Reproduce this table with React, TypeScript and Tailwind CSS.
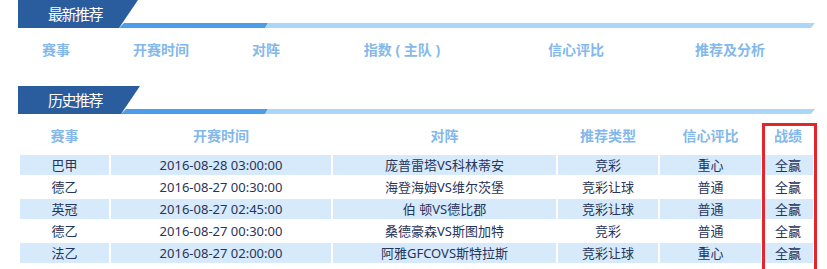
const FONT = '"Microsoft YaHei", "Noto Sans", "Noto Sans CJK SC", sans-serif';

type Row = {
  league: string;
  time: string;
  match: string;
  kind: string;
  level: string;
  result: string;
};

const ROWS: Row[] = [
  { league: '巴甲', time: '2016-08-28 03:00:00', match: '庞普雷塔VS科林蒂安', kind: '竞彩', level: '重心', result: '全赢' },
  { league: '德乙', time: '2016-08-27 00:30:00', match: '海登海姆VS维尔茨堡', kind: '竞彩让球', level: '普通', result: '全赢' },
  { league: '英冠', time: '2016-08-27 02:45:00', match: '伯 顿VS德比郡', kind: '竞彩让球', level: '普通', result: '全赢' },
  { league: '德乙', time: '2016-08-27 00:30:00', match: '桑德豪森VS斯图加特', kind: '竞彩', level: '普通', result: '全赢' },
  { league: '法乙', time: '2016-08-27 02:00:00', match: '阿雅GFCOVS斯特拉斯', kind: '竞彩让球', level: '重心', result: '全赢' },
  { league: '比利甲', time: '2016-08-27 02:30:00', match: '梅赫伦VS列日标准', kind: '竞彩让球', level: '普通', result: '全赢' },
];

// section banner: dark tab on the left, two-tone rule underneath
function Banner({ title, tab }: { title: string; tab: number }) {
  return (
    <div className="relative ml-[18px] h-[28px] w-[797px]">
      <svg className="absolute inset-0" width="797" height="28" viewBox="0 0 797 28">
        <polygon points={`${tab - 14},23 250,23 247,28 ${tab - 19},28`} fill="#4d9cea" />
        <polygon points="250,23 797,23 793,28 247,28" fill="#acd6f8" />
        <polygon points={`0,0 ${tab},0 ${tab - 19},28 0,28`} fill="#2a5d9e" />
      </svg>
      <div className="relative pl-[30px] text-[15px] leading-[28px] tracking-[-1.5px] text-white">
        {title}
      </div>
    </div>
  );
}

const TOP_HEADS: [string, string][] = [
  ['赛事', 'w-[72px]'],
  ['开赛时间', 'w-[138px]'],
  ['对阵', 'w-[72px]'],
  ['指数 ( 主队 )', 'w-[200px]'],
  ['信心评比', 'w-[148px]'],
  ['推荐及分析', 'w-[160px]'],
];

const HIST_HEADS = ['赛事', '开赛时间', '对阵', '推荐类型', '信心评比', '战绩'];
const HIST_WIDTHS = ['w-[89px]', 'w-[220px]', 'w-[223px]', 'w-[100px]', 'w-[101px]', 'w-[50px]'];

export default function App() {
  return (
    <div
      className="relative h-[269px] w-[827px] overflow-hidden bg-white"
      style={{ fontFamily: FONT }}
    >
      <Banner title="最新推荐" tab={120} />

      <div className="ml-[20px] mt-[12px] flex h-[20px] text-[14px] font-bold leading-[20px] text-[#84b8ea]">
        {TOP_HEADS.map(([h, w]) => (
          <div key={h} className={`${w} whitespace-pre text-center`}>
            {h}
          </div>
        ))}
      </div>

      <div className="mt-[26px]">
        <Banner title="历史推荐" tab={122} />
      </div>

      <table className="ml-[18px] mt-[6px] table-fixed border-separate border-spacing-[2px]">
        <colgroup>
          {HIST_WIDTHS.map((w, i) => (
            <col key={i} className={w} />
          ))}
        </colgroup>
        <thead>
          <tr>
            {HIST_HEADS.map((h) => (
              <th
                key={h}
                className="h-[31px] p-0 pb-[4px] text-center text-[14px] font-bold leading-[20px] text-[#84b8ea]"
              >
                {h}
              </th>
            ))}
          </tr>
        </thead>
        <tbody>
          {ROWS.map((r, i) => {
            const bg = i % 2 === 0 ? 'bg-[#d6eafb]' : 'bg-white';
            const cells = [r.league, r.time, r.match, r.kind, r.level, r.result];
            return (
              <tr key={i}>
                {cells.map((c, j) => (
                  <td
                    key={j}
                    className={`${bg} h-[20px] whitespace-nowrap p-0 text-center text-[13px] leading-[20px] text-[#27345a]`}
                  >
                    {c}
                  </td>
                ))}
              </tr>
            );
          })}
        </tbody>
      </table>

      {/* red highlight round the results column */}
      <div className="absolute left-[762px] top-[123px] h-[200px] w-[55px] border-[3px] border-[#e3262b]" />
    </div>
  );
}
